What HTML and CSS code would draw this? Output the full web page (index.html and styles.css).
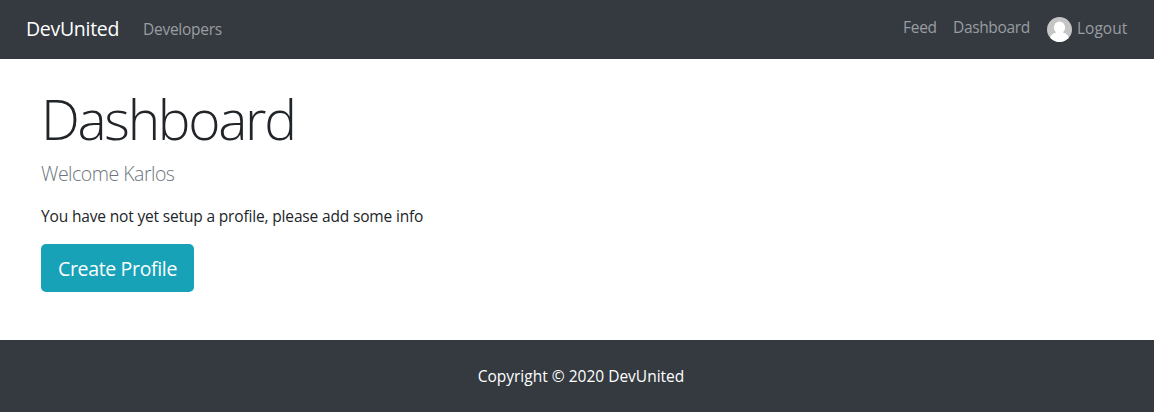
FILE: index.html
```html
<!DOCTYPE html>
<html lang="en">
<head>
<meta charset="utf-8">
<title>DevUnited</title>
<link rel="stylesheet" href="styles.css">
</head>
<body>
<nav class="navbar">
  <a class="brand">DevUnited</a>
  <a class="nav-link developers">Developers</a>
  <div class="nav-right">
    <a class="nav-link feed">Feed</a>
    <a class="nav-link dash">Dashboard</a>
    <a class="nav-link logout">
      <svg class="avatar" viewBox="0 0 25 25"><defs><clipPath id="round"><circle cx="12.5" cy="12.5" r="12.5"/></clipPath></defs><g clip-path="url(#round)"><rect width="25" height="25" fill="#c5c5c5"/><ellipse cx="12.5" cy="10.4" rx="5.600" ry="6" fill="#fff"/><path d="M9 13h7v2.500c3 .5 5.500 3 6 6V25H3v-3.500c.5-3 3-5.500 6-6z" fill="#fff"/></g></svg>
      <span class="logout-text">Logout</span>
    </a>
  </div>
</nav>
<main class="content">
  <h1 class="title">Dashboard</h1>
  <p class="lead">Welcome Karlos</p>
  <p class="info">You have not yet setup a profile, please add some info</p>
  <a class="button">Create Profile</a>
</main>
<footer class="footer">Copyright © 2020 DevUnited</footer>
</body>
</html>
```
FILE: styles.css
```css
* { box-sizing: border-box; }
body { margin: 0; height: 412px; display: flex; flex-direction: column; background: #fff; color: #212529; font: 15.5px/24px "Open Sans", "Noto Sans", sans-serif; white-space: nowrap; overflow: hidden; }
.navbar { height: 59px; flex: none; display: flex; align-items: flex-start; padding: 17px 27px 0 26px; background: #343a40; }
.brand { color: #fff; font-size: 19.5px; letter-spacing: -.3px; width: 117px; }
.nav-link { color: #9a9da0; letter-spacing: -.27px; }
.developers { margin-top: -.5px; }
.nav-right { margin-left: auto; display: flex; margin-top: -2px; }
.feed { width: 50px; }
.dash { width: 94px; letter-spacing: -.35px; }
.logout { display: flex; gap: 5px; width: 80px; letter-spacing: 0; }
.logout-text { padding-top: 1px; }
.avatar { width: 25px; height: 25px; margin-top: 2px; flex: none; }
.content { flex: 1; padding: 26px 41px 0; }
.title { margin: 0; font-size: 55px; line-height: 67px; font-weight: 300; letter-spacing: -2.3px; }
.lead { margin: 7px 0 0; font-size: 19.5px; line-height: 30px; font-weight: 300; letter-spacing: -.5px; color: #6c757d; }
.info { margin: 15px 0 16px; letter-spacing: -.16px; }
.button { display: flex; width: 153px; height: 48px; padding-top: 1px; align-items: center; justify-content: center; border-radius: 5px; background: #17a2b8; color: #fff; font-size: 19.5px; letter-spacing: -.34px; }
.footer { height: 72px; flex: none; display: flex; align-items: center; justify-content: center; padding-left: 8px; background: #343a40; color: #fff; }
```
